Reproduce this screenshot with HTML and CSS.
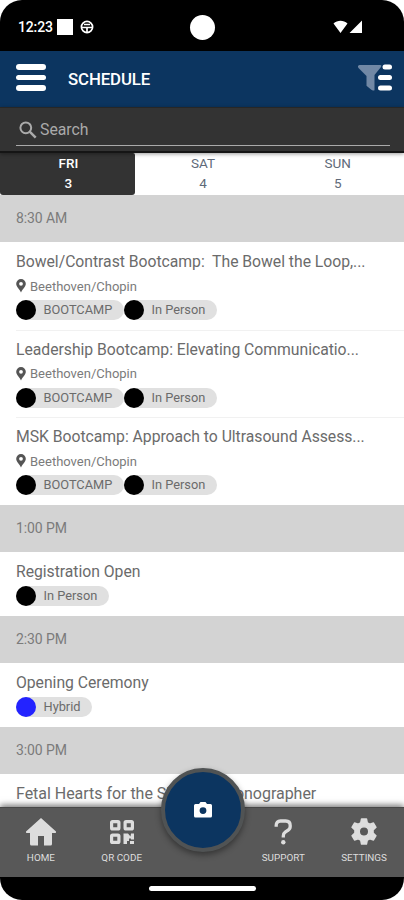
FILE: index.html
```
<!DOCTYPE html>
<html lang="en">
<head>
<meta charset="utf-8">
<title>Schedule</title>
<link rel="stylesheet" href="styles.css">
</head>
<body>
<svg class="defs" width="0" height="0" aria-hidden="true">
  <symbol id="pin" viewBox="0 0 10 14"><path fill-rule="evenodd" d="M5 0a4.8 4.8 0 0 0-4.8 4.8C.2 7.600 3 9.500 5 13.500 7 9.500 9.800 7.600 9.800 4.800A4.800 4.800 0 0 0 5 0zm0 2.900a1.900 1.900 0 1 1 0 3.800 1.900 1.900 0 0 1 0-3.800z"/></symbol>
</svg>
<div class="phone">
  <div class="status">
    <span class="clock">12:23</span>
    <i class="square"></i>
    <svg class="wheel" width="14" height="14" viewBox="0 0 14 14" fill="none" stroke="#fff" stroke-width="1.700"><circle cx="7" cy="7" r="5.600"/><path d="M1.500 7.500h11M7 7v6M4 4.500h6"/></svg>
    <i class="camera-hole"></i>
    <svg class="signal" width="30" height="14" viewBox="0 0 30 14" fill="#fff"><path d="M.5 3.500C4.500-.3 10.500-.3 14.500 3.500L7.500 13zM29 .5V13H16.500z"/></svg>
  </div>
  <header class="topbar">
    <div class="menu"><i></i><i></i><i></i></div>
    <h1>SCHEDULE</h1>
    <svg class="filter" width="36" height="28" viewBox="0 0 36 28"><path fill="#7188a5" d="M2.500 1h21q1.500 0 .5 2l-6.500 8v15.300q-2 .7-3.500-.8l-4.500-3.800V12L1.500 4Q0 1.500 2.500 1z"/><g fill="#fff"><rect x="25.500" y=".5" width="9.500" height="5" rx="2.500"/><rect x="21" y="11" width="14" height="5" rx="2.500"/><rect x="21" y="21.500" width="14" height="5" rx="2.500"/></g></svg>
  </header>
  <div class="search">
    <div class="field">
      <svg width="18" height="18" viewBox="0 0 18 18" fill="none" stroke="#aaa"><circle cx="6.800" cy="6.800" r="5.400" stroke-width="2"/><path d="M10.700 10.700l6 6" stroke-width="2.500"/></svg>
      <span>Search</span>
    </div>
  </div>
  <div class="tabs">
    <div class="tab active"><span>FRI</span><span>3</span></div>
    <div class="tab"><span>SAT</span><span>4</span></div>
    <div class="tab"><span>SUN</span><span>5</span></div>
  </div>
  <main class="list">
    <h2>8:30 AM</h2>
    <article class="item tall">
      <h3>Bowel/Contrast Bootcamp:&nbsp; The Bowel the Loop,...</h3>
      <p><svg width="10" height="14"><use href="#pin"/></svg>Beethoven/Chopin</p>
      <div class="chips"><span class="chip camp">BOOTCAMP</span><span class="chip">In Person</span></div>
    </article>
    <article class="item tall">
      <h3>Leadership Bootcamp: Elevating Communicatio...</h3>
      <p><svg width="10" height="14"><use href="#pin"/></svg>Beethoven/Chopin</p>
      <div class="chips"><span class="chip camp">BOOTCAMP</span><span class="chip">In Person</span></div>
    </article>
    <article class="item tall">
      <h3>MSK Bootcamp: Approach to Ultrasound Assess...</h3>
      <p><svg width="10" height="14"><use href="#pin"/></svg>Beethoven/Chopin</p>
      <div class="chips"><span class="chip camp">BOOTCAMP</span><span class="chip">In Person</span></div>
    </article>
    <h2>1:00 PM</h2>
    <article class="item">
      <h3>Registration Open</h3>
      <div class="chips"><span class="chip">In Person</span></div>
    </article>
    <h2>2:30 PM</h2>
    <article class="item">
      <h3>Opening Ceremony</h3>
      <div class="chips"><span class="chip hybrid">Hybrid</span></div>
    </article>
    <h2>3:00 PM</h2>
    <article class="item last">
      <h3>Fetal Hearts for the Skeptical Sonographer</h3>
    </article>
  </main>
  <nav class="nav">
    <a><svg width="32" height="30" viewBox="0 0 32 30"><path fill="#ddd" d="M16 1 31 14.500q.5 1.500-1 1.500h-3v11q0 1.500-1.500 1.500H19V19h-6v9.500H6.500Q5 28.500 5 27V16H2Q.5 16 1 14.500z"/></svg><span>HOME</span></a>
    <a><svg width="32" height="30" viewBox="0 0 32 30"><g fill="none" stroke="#ddd" stroke-width="3.200"><rect x="5.600" y="4.600" width="7.300" height="7.300" rx="1"/><rect x="19.100" y="4.600" width="7.300" height="7.300" rx="1"/><rect x="5.600" y="18.100" width="7.300" height="7.300" rx="1"/></g><path fill="#ddd" d="M17.500 16.500H22l2.500 3 .5-3h3v6h-3v-1h-2v2.500h-2V27h-3.500zM24 24h4v3h-4z"/></svg><span>QR CODE</span></a>
    <a class="gap"></a>
    <a><svg width="32" height="30" viewBox="0 0 32 30"><path fill="none" stroke="#ddd" stroke-width="3.300" d="M9.200 9.700V8.500Q9.200 4 13.500 4h5.200q4.500 0 4.500 4.500v1q0 2.500-2.500 4l-2.500 1.700q-1.900 1.300-1.900 3.800v1.500"/><circle cx="16.300" cy="25.200" r="2.200" fill="#ddd"/></svg><span>SUPPORT</span></a>
    <a><svg width="32" height="30" viewBox="0 0 32 30"><path fill="#ddd" stroke="#ddd" stroke-width="1.400" stroke-linejoin="round" fill-rule="evenodd" d="M13.500 2h5l.8 3.800 2.500 1.400 3.700-1.200 2.500 4.300-2.900 2.700v3l2.900 2.700-2.500 4.300-3.700-1.200-2.500 1.400-.8 3.800h-5l-.8-3.800-2.500-1.400L6.500 23 4 18.700 6.900 16v-3L4 10.300 6.500 6l3.700 1.200 2.500-1.400zM16 9.800a4.700 4.700 0 1 0 0 9.400 4.700 4.700 0 0 0 0-9.400z"/></svg><span>SETTINGS</span></a>
    <div class="fab"><svg width="20" height="18" viewBox="0 0 20 18"><path fill="#fff" fill-rule="evenodd" d="M2.500 3H6l1.500-2h5L14 3h3.500Q19 3 19 4.500v10.500Q19 16.500 17.500 16.500h-15Q1 16.500 1 15V4.500Q1 3 2.500 3zM10 6.200a3.400 3.400 0 1 0 0 6.800 3.400 3.400 0 0 0 0-6.800z"/></svg></div>
  </nav>
  <div class="gesture"><i></i></div>
</div>
</body>
</html>
```
FILE: styles.css
```
* { box-sizing: border-box; margin: 0; padding: 0; }
body { background: #fff; font-family: Roboto, "Liberation Sans", sans-serif; }
.defs { position: absolute; }
.phone { width: 404px; height: 900px; display: flex; flex-direction: column; overflow: hidden; border-radius: 22px; background: #fff; }
.status { position: relative; flex: 0 0 51px; background: #000; color: #fff; display: flex; align-items: center; padding: 2px 41px 0 18px; }
.clock { font-size: 14px; font-weight: 500; width: 35px; letter-spacing: -.15px; }
.square { width: 16px; height: 16px; background: #fff; margin: 0 7px 0 4px; }
.camera-hole { position: absolute; left: 190px; top: 15px; width: 25px; height: 25px; border-radius: 50%; background: #fff; }
.signal { margin-left: auto; }
.topbar { flex: 0 0 56px; background: #0c3560; display: flex; align-items: center; padding: 0 11px 0 16px; }
.menu { width: 30px; display: flex; flex-direction: column; gap: 5px; margin-top: -3px; }
.menu i { height: 5.500px; border-radius: 3px; background: #fff; }
.topbar h1 { color: #fff; font-size: 16.800px; line-height: 20px; font-weight: 500; margin-left: 22px; margin-top: -1px; letter-spacing: -.1px; }
.filter { margin-left: auto; margin-top: -2px; }
.search { position: relative; z-index: 1; flex: 0 0 46px; background: #333; padding: 0 14px 0 16px; border-top: 1px solid #272727; border-bottom: 2px solid #151515; box-shadow: 0 1px 4px #0006; }
.field { height: 38px; border-bottom: 1px solid #aaa; display: flex; align-items: center; padding: 6px 0 0 3px; color: #aaa; gap: 3px; font-size: 15.800px; }
.tabs { flex: 0 0 42px; display: flex; }
.tab { flex: 1; color: #606a79; font-size: 13.500px; line-height: 20px; padding-left: 2px; display: flex; flex-direction: column; align-items: center; }
.tab.active { background: #333; color: #fff; font-weight: 500; border-radius: 0 2px 3px 3px; }
.list { flex: 1 1 0; min-height: 0; overflow: hidden; color: #6b6b6b; }
.list h2 { height: 47px; line-height: 47px; padding-left: 16px; background: #d3d3d3; color: #7b7b7b; font-size: 14px; font-weight: 400; letter-spacing: -.1px; }
.item { height: 64px; padding: 9px 16px 0; background: #fff; }
.item.tall { height: 87.670px; }
.item.tall + .tall { height: 87.670px; margin-left: 16px; padding-left: 0; border-top: 1px solid #f1f1f1; padding-top: 8px; }
.item h3 { font-size: 15.750px; line-height: 21px; font-weight: 400; white-space: nowrap; letter-spacing: -.03px; }
.item.last h3 { font-size: 16px; }
.item p { display: flex; align-items: center; gap: 4px; height: 20px; margin-top: 4px; font-size: 13px; color: #7b7b7b; }
.item p svg { fill: #555; }
.chips { display: flex; margin-top: 4px; }
.chip { width: 93px; height: 20px; border-radius: 10px; background: #e0e0e0; font-size: 12.800px; line-height: 20px; display: flex; white-space: nowrap; }
.chip::before { content: ""; width: 20px; height: 20px; border-radius: 50%; background: #000; margin-right: 7.500px; flex: none; }
.chip.camp { width: 108px; }
.chip.hybrid { width: 76px; }
.chip.hybrid::before { background: #2323ff; }
.nav { position: relative; flex: 0 0 70px; background: #585858; display: flex; box-shadow: 0 -2px 6px #0008; border-top: 1px solid #484848; }
.nav a { flex: 1; display: flex; flex-direction: column; align-items: center; padding: 9px 0 0 1px; color: #ddd; font-size: 9.900px; }
.nav a span { margin-top: 4px; line-height: 13px; }
.fab { position: absolute; left: 161px; top: -40px; width: 84px; height: 84px; border: 4.500px solid #505354; border-radius: 50%; background: #0c3560; display: flex; align-items: center; justify-content: center; box-shadow: 0 3px 6px #0006; }
.gesture { position: relative; flex: 0 0 23px; background: #000; display: flex; justify-content: center; padding-top: 9px; }
.gesture i { width: 107px; height: 5px; border-radius: 3px; background: #fff; }
```
